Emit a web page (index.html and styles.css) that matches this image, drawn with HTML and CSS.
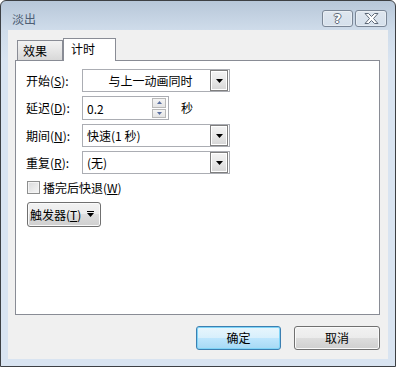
FILE: index.html
```html
<!DOCTYPE html>
<html lang="zh-CN">
<head>
<meta charset="utf-8">
<title>淡出</title>
<link rel="stylesheet" href="styles.css">
</head>
<body>
<div class="window">
  <div class="titlebar">
    <span class="title">淡出</span>
    <div class="caption">
      <div class="cap help"><span class="qmark">?</span></div>
      <div class="cap close">
        <svg width="15" height="11" viewBox="0 0 15 11"><polygon points="1,0.5 4.5,0.5 7.5,3.5 10.5,0.5 14,0.5 9.5,5.5 14,10.5 10.5,10.5 7.5,7.5 4.5,10.5 1,10.5 5.5,5.5" fill="#fff" stroke="#5d6877" stroke-width="1" stroke-linejoin="round"/></svg>
      </div>
    </div>
  </div>
  <div class="client">
    <div class="tabs">
      <div class="tab">效果</div>
      <div class="tab active">计时</div>
    </div>
    <div class="panel">
      <div class="form">
        <span class="lbl">开始(<u>S</u>):</span>
        <div class="combo">
          <span class="val center">与上一动画同时</span>
          <span class="drop"><svg width="7" height="4" viewBox="0 0 7 4"><polygon points="0,0 7,0 3.5,4" fill="#000"/></svg></span>
        </div>

        <span class="lbl">延迟(<u>D</u>):</span>
        <div class="spinrow">
          <div class="spin">
            <span class="val">0.2</span>
            <span class="spinbtns">
              <span class="sb"><svg width="5" height="3" viewBox="0 0 5 3"><polygon points="2.5,0 5,3 0,3" fill="#5a6fa0"/></svg></span>
              <span class="sb"><svg width="5" height="3" viewBox="0 0 5 3"><polygon points="0,0 5,0 2.5,3" fill="#5a6fa0"/></svg></span>
            </span>
          </div>
          <span class="unit">秒</span>
        </div>

        <span class="lbl">期间(<u>N</u>):</span>
        <div class="combo">
          <span class="val">快速(1 秒)</span>
          <span class="drop"><svg width="7" height="4" viewBox="0 0 7 4"><polygon points="0,0 7,0 3.5,4" fill="#000"/></svg></span>
        </div>

        <span class="lbl">重复(<u>R</u>):</span>
        <div class="combo">
          <span class="val">(无)</span>
          <span class="drop"><svg width="7" height="4" viewBox="0 0 7 4"><polygon points="0,0 7,0 3.5,4" fill="#000"/></svg></span>
        </div>
      </div>

      <div class="checkrow">
        <span class="checkbox"></span>
        <span>播完后快退(<u>W</u>)</span>
      </div>

      <div class="trigger">
        <span>触发器(<u>T</u>)</span>
        <svg width="7" height="7" viewBox="0 0 7 7"><rect x="0" y="0" width="7" height="1" fill="#000"/><polygon points="0,2 7,2 3.5,6" fill="#000"/></svg>
      </div>
    </div>
    <div class="footer">
      <div class="btn default">确定</div>
      <div class="btn cancel">取消</div>
    </div>
  </div>
</div>
</body>
</html>
```
FILE: styles.css
```css
* { box-sizing: border-box; }
body {
  margin: 0;
  font-family: "Noto Sans CJK SC", "Noto Sans", sans-serif;
  font-size: 12px;
  color: #000;
}
.window {
  width: 396px;
  height: 367px;
  border: 1px solid #3d4044;
  border-radius: 6px 6px 0 0;
  background: linear-gradient(#b7c7d9, #cfdcea 29px, #d9e4f1 60px, #d9e4f1);
  padding: 0 7px 7px 7px;
  display: flex;
  flex-direction: column;
}
.titlebar {
  height: 29px;
  display: flex;
  align-items: flex-start;
  flex: none;
}
.title {
  margin: 10px 0 0 4px;
  line-height: 16px;
  color: #4f5f75;
}
.caption {
  margin: 9px 1px 0 auto;
  display: flex;
  gap: 2px;
}
.cap {
  height: 17px;
  border: 1px solid #7a8696;
  border-radius: 3px;
  background: linear-gradient(rgba(255,255,255,0.5), rgba(255,255,255,0.2));
  box-shadow: inset 0 0 0 1px rgba(255,255,255,0.35);
  display: flex;
  align-items: center;
  justify-content: center;
}
.help { width: 31px; }
.close { width: 32px; }
.qmark {
  font-family: "DejaVu Sans", sans-serif;
  font-weight: bold;
  font-size: 13px;
  line-height: 13px;
  color: #fff;
  text-shadow: 1px 0 0 #5d6877, -1px 0 0 #5d6877, 0 1px 0 #5d6877, 0 -1px 0 #5d6877;
}
.client {
  flex: 1;
  background: #f0f0f0;
  padding-top: 8px;
  display: flex;
  flex-direction: column;
}
.tabs {
  display: flex;
  align-items: flex-end;
  height: 22px;
  padding-left: 9px;
  position: relative;
  z-index: 1;
}
.tab {
  width: 46px;
  height: 20px;
  border: 1px solid #898c95;
  border-bottom: none;
  background: linear-gradient(#f2f2f2, #e6e6e6 50%, #d8d8d8);
  padding-left: 5px;
  line-height: 19px;
}
.tab.active {
  width: 53px;
  height: 23px;
  margin-bottom: -1px;
  background: #fff;
  padding-left: 7px;
  line-height: 20px;
}
.panel {
  margin-left: 7px;
  width: 365px;
  height: 255px;
  border: 1px solid #898c95;
  background: #fff;
  padding: 8px 0 0 10px;
}
.form {
  display: grid;
  grid-template-columns: 56px auto;
  row-gap: 4px;
  align-items: center;
}
.lbl { line-height: 16px; }
.combo {
  width: 148px;
  height: 23px;
  border: 1px solid #abadb3;
  display: flex;
  align-items: stretch;
  padding-right: 1px;
}
.val {
  flex: 1;
  line-height: 21px;
  padding-left: 4px;
}
.val.center { text-align: center; padding-left: 8px; }
.drop {
  width: 18px;
  border: 1px solid #7f7f7f;
  box-shadow: inset 0 0 0 1px #fff;
  background: linear-gradient(#f4f4f4, #e8e8e8 50%, #d6d6d6);
  display: flex;
  align-items: center;
  justify-content: center;
}
.spinrow {
  display: flex;
  align-items: center;
}
.spin {
  width: 87px;
  height: 24px;
  border: 1px solid #abadb3;
  display: flex;
  padding: 1px 1px 1px 0;
}
.spinbtns {
  width: 15px;
  display: flex;
  flex-direction: column;
  gap: 1px;
  padding: 0 1px 0 0;
}
.sb {
  flex: 1;
  border: 1px solid #b8b8b8;
  background: linear-gradient(#f5f5f5, #e4e4e4);
  display: flex;
  align-items: center;
  justify-content: center;
}
.unit { margin-left: 12px; line-height: 16px; }
.checkrow {
  margin-top: 7px;
  margin-left: 1px;
  height: 13px;
  display: flex;
  align-items: center;
  gap: 3px;
  line-height: 16px;
}
.checkbox {
  width: 13px;
  height: 13px;
  border: 1px solid #8e8f8f;
  background: linear-gradient(135deg, #d9dadb, #f6f6f6);
  box-shadow: inset 0 0 0 1px #f4f4f4;
}
.trigger {
  margin-top: 8px;
  margin-left: 1px;
  width: 74px;
  height: 25px;
  border: 1px solid #707070;
  border-radius: 3px;
  background: linear-gradient(#f2f2f2, #ebebeb 50%, #dddddd 50%, #cfcfcf);
  box-shadow: inset 0 0 0 1px #fafafa;
  display: flex;
  align-items: center;
  gap: 6px;
  padding-left: 2px;
  line-height: 16px;
}
.footer {
  display: flex;
  justify-content: flex-end;
  gap: 13px;
  margin-top: 11px;
  padding-right: 8px;
}
.btn {
  height: 24px;
  border-radius: 3px;
  display: flex;
  align-items: center;
  justify-content: center;
  line-height: 16px;
}
.btn.default {
  width: 85px;
  border: 1px solid #3c7fb1;
  background: linear-gradient(#e8f6fd, #d7effc 50%, #bee6fd 50%, #a6d9f4);
  box-shadow: inset 0 0 0 1px #7fd4f7;
}
.btn.cancel {
  width: 86px;
  border: 1px solid #707070;
  background: linear-gradient(#f2f2f2, #ebebeb 50%, #dddddd 50%, #cfcfcf);
  box-shadow: inset 0 0 0 1px #fafafa;
}
```
